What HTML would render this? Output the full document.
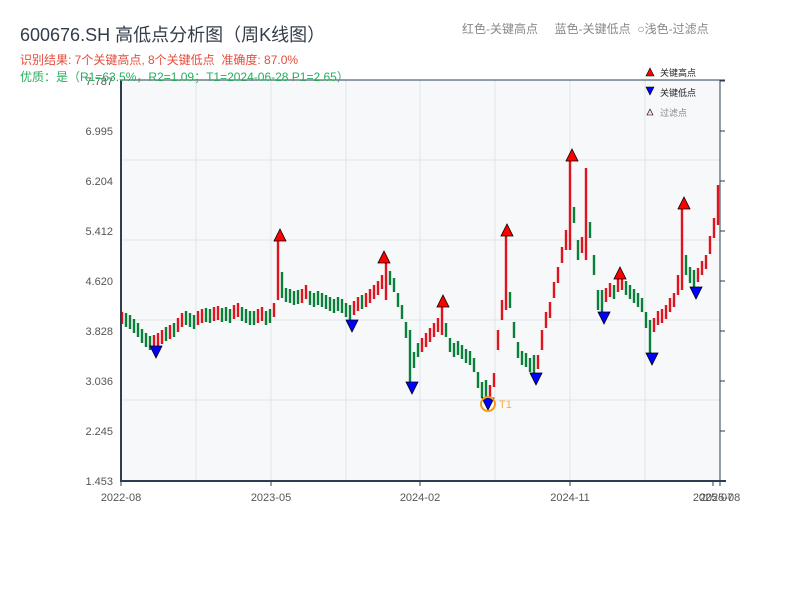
<!DOCTYPE html>
<html><head><meta charset="utf-8"><style>
body{margin:0;width:800px;height:600px;background:#fff;overflow:hidden;font-family:"Liberation Sans","Noto Sans CJK SC",sans-serif;position:relative}
.t{position:absolute;white-space:nowrap}
</style></head><body>
<svg width="800" height="600" style="position:absolute;left:0;top:0" font-family="Liberation Sans, Noto Sans CJK SC, sans-serif">
<rect x="121" y="80" width="599" height="401" fill="#f6f8fa"/>
<g stroke="#e3e6ea">
<line x1="196" y1="80" x2="196" y2="481"/><line x1="271" y1="80" x2="271" y2="481"/><line x1="346" y1="80" x2="346" y2="481"/><line x1="420" y1="80" x2="420" y2="481"/><line x1="495" y1="80" x2="495" y2="481"/><line x1="570" y1="80" x2="570" y2="481"/><line x1="645" y1="80" x2="645" y2="481"/>
<line x1="121" y1="160" x2="720" y2="160"/><line x1="121" y1="240" x2="720" y2="240"/><line x1="121" y1="320" x2="720" y2="320"/><line x1="121" y1="400" x2="720" y2="400"/>
</g>
<path stroke="#e0141e" stroke-width="2.4" fill="none" d="M122,312V324 M154,335V352 M158,333V347 M162,330V344 M170,325V339 M178,318V332 M182,313V327 M198,311V325 M202,309V323 M214,307V321 M218,306V320 M234,305V319 M238,303V317 M258,309V323 M262,307V321 M274,303V317 M278,240V300 M302,289V303 M306,285V299 M354,301V315 M358,297V311 M366,293V307 M370,289V303 M374,285V299 M378,281V295 M382,275V289 M386,262V300 M422,338V352 M426,333V347 M430,328V342 M434,323V337 M438,318V332 M442,305V335 M490,385V399 M494,373V387 M498,330V350 M502,300V320 M506,232V310 M538,355V369 M542,330V350 M546,312V328 M550,302V318 M554,282V298 M558,267V283 M562,247V263 M566,230V250 M570,160V250 M582,237V253 M586,168V260 M606,288V302 M610,283V297 M618,278V292 M622,276V290 M654,318V332 M658,311V325 M662,309V323 M666,305V319 M670,298V312 M674,293V307 M678,275V295 M682,208V290 M698,268V282 M702,261V275 M706,255V269 M710,236V254 M714,218V238 M718,185V225"/>
<path stroke="#0a7f3a" stroke-width="2.4" fill="none" d="M126,313V327 M130,315V329 M134,319V333 M138,323V337 M142,329V343 M146,333V347 M150,336V350 M166,327V341 M174,323V337 M186,311V325 M190,313V327 M194,315V329 M206,308V322 M210,309V323 M222,308V322 M226,307V321 M230,309V323 M242,307V321 M246,309V323 M250,311V325 M254,311V325 M266,311V325 M270,309V323 M282,272V298 M286,288V302 M290,289V303 M294,291V305 M298,290V304 M310,291V305 M314,293V307 M318,291V305 M322,293V307 M326,295V309 M330,297V311 M334,299V313 M338,297V311 M342,299V313 M346,303V317 M350,305V326 M362,295V309 M390,271V285 M394,278V292 M398,293V307 M402,305V319 M406,322V338 M410,330V382 M414,352V368 M418,343V357 M446,323V337 M450,338V352 M454,343V357 M458,341V355 M462,345V359 M466,349V363 M470,351V365 M474,358V372 M478,372V388 M482,382V398 M486,380V400 M510,292V308 M514,322V338 M518,342V358 M522,351V365 M526,353V367 M530,358V372 M534,355V375 M574,207V223 M578,240V260 M590,222V238 M594,255V275 M598,290V310 M602,290V318 M614,285V299 M626,281V295 M630,285V299 M634,289V303 M638,293V307 M642,298V312 M646,312V328 M650,320V357 M686,255V275 M690,267V283 M694,270V293"/>
<line x1="121" y1="80" x2="725" y2="80" stroke="#2c3e50"/>
<line x1="121" y1="80" x2="121" y2="482" stroke="#2c3e50" stroke-width="2"/>
<line x1="120" y1="481" x2="726" y2="481" stroke="#2c3e50" stroke-width="2"/>
<line x1="720" y1="80" x2="720" y2="481" stroke="#2c3e50"/>
<g stroke="#2c3e50"><line x1="720" y1="81" x2="725" y2="81"/><line x1="720" y1="131" x2="725" y2="131"/><line x1="720" y1="181" x2="725" y2="181"/><line x1="720" y1="231" x2="725" y2="231"/><line x1="720" y1="281" x2="725" y2="281"/><line x1="720" y1="331" x2="725" y2="331"/><line x1="720" y1="381" x2="725" y2="381"/><line x1="720" y1="431" x2="725" y2="431"/>
<line x1="121" y1="481" x2="121" y2="486"/><line x1="271" y1="481" x2="271" y2="486"/><line x1="420" y1="481" x2="420" y2="486"/><line x1="570" y1="481" x2="570" y2="486"/><line x1="713" y1="481" x2="713" y2="486"/><line x1="720" y1="481" x2="720" y2="486"/></g>
<g font-size="11" fill="#555" text-anchor="end">
<text x="113" y="85">7.787</text><text x="113" y="135">6.995</text><text x="113" y="185">6.204</text><text x="113" y="235">5.412</text><text x="113" y="285">4.620</text><text x="113" y="335">3.828</text><text x="113" y="385">3.036</text><text x="113" y="435">2.245</text><text x="113" y="485">1.453</text>
</g>
<g font-size="11" fill="#555" text-anchor="middle">
<text x="121" y="501">2022-08</text><text x="271" y="501">2023-05</text><text x="420" y="501">2024-02</text><text x="570" y="501">2024-11</text><text x="713" y="501">2025-07</text><text x="720" y="501">2025-08</text>
</g>
<g fill="#f00" stroke="#000" stroke-width="0.8">
<polygon points="274,241 286,241 280,229"/><polygon points="378,263 390,263 384,251"/><polygon points="437,307 449,307 443,295"/><polygon points="501,236 513,236 507,224"/><polygon points="566,161 578,161 572,149"/><polygon points="614,279 626,279 620,267"/><polygon points="678,209 690,209 684,197"/>
</g>
<g fill="#00f" stroke="#000" stroke-width="0.8">
<polygon points="150,346 162,346 156,358"/><polygon points="346,320 358,320 352,332"/><polygon points="406,382 418,382 412,394"/><polygon points="482,398 494,398 488,410"/><polygon points="530,373 542,373 536,385"/><polygon points="598,312 610,312 604,324"/><polygon points="646,353 658,353 652,365"/><polygon points="690,287 702,287 696,299"/>
</g>
<circle cx="488" cy="404" r="7" fill="none" stroke="#f39c12" stroke-width="2"/>
<text x="499" y="408" font-size="11" fill="#f5b041">T1</text>
<polygon points="646,76 654,76 650,68" fill="#f00" stroke="#000" stroke-width="0.6"/><text x="660" y="76" font-size="9" fill="#222">关键高点</text>
<polygon points="646,87 654,87 650,95" fill="#00f" stroke="#000" stroke-width="0.6"/><text x="660" y="96" font-size="9" fill="#222">关键低点</text>
<polygon points="647,115 653,115 650,109" fill="#fdd" stroke="#000" stroke-width="0.6"/><text x="660" y="116" font-size="9" fill="#888">过滤点</text>
</svg>
<div class="t" style="left:20px;top:21px;font-size:18px;color:#333d4a">600676.SH 高低点分析图（周K线图）</div>
<div class="t" style="left:20px;top:51px;font-size:12px;color:#e74c3c">识别结果: 7个关键高点, 8个关键低点&nbsp;&nbsp;准确度: 87.0%</div>
<div class="t" style="left:20px;top:68px;font-size:12px;color:#27ae60">优质：是（R1=63.5%，R2=1.09；T1=2024-06-28 P1=2.65）</div>
<div class="t" style="left:462px;top:20px;font-size:12px;color:#888">红色-关键高点&nbsp;&nbsp;&nbsp;&nbsp;&nbsp;蓝色-关键低点&nbsp;&nbsp;○浅色-过滤点</div>
</body></html>
